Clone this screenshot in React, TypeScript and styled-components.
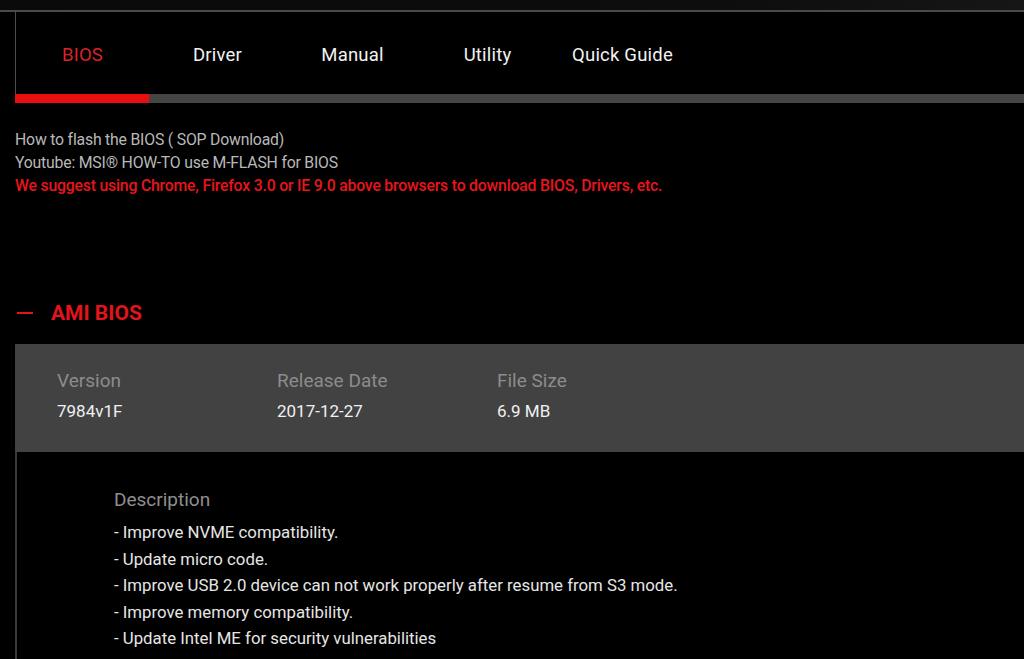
import styled, { createGlobalStyle } from "styled-components";

const GlobalStyle = createGlobalStyle`
  html, body {
    margin: 0;
    padding: 0;
    background: #000;
  }
  body {
    font-family: Roboto, "Liberation Sans", sans-serif;
    color: #fff;
  }
`;

const tabs = ["BIOS", "Driver", "Manual", "Utility", "Quick Guide"];

const links = [
  { text: "How to flash the BIOS ( SOP Download)", warn: false },
  { text: "Youtube: MSI® HOW-TO use M-FLASH for BIOS", warn: false },
  {
    text: "We suggest using Chrome, Firefox 3.0 or IE 9.0 above browsers to download BIOS, Drivers, etc.",
    warn: true,
  },
];

const specs = [
  { label: "Version", value: "7984v1F" },
  { label: "Release Date", value: "2017-12-27" },
  { label: "File Size", value: "6.9 MB" },
];

const notes = [
  "- Improve NVME compatibility.",
  "- Update micro code.",
  "- Improve USB 2.0 device can not work properly after resume from S3 mode.",
  "- Improve memory compatibility.",
  "- Update Intel ME for security vulnerabilities",
];

const App = () => {
  return (
    <>
      <GlobalStyle />
      <Page>
        <TopStrip />
        <TabBar>
          {tabs.map((t, i) => (
            <Tab key={t} $active={i === 0}>
              {t}
            </Tab>
          ))}
        </TabBar>
        <Track>
          <TrackFill />
        </Track>
        <LinkList>
          {links.map((l) => (
            <LinkLine key={l.text} $warn={l.warn}>
              {l.text}
            </LinkLine>
          ))}
        </LinkList>
        <SectionTitle>
          <Dash />
          AMI BIOS
        </SectionTitle>
        <SpecPanel>
          {specs.map((s) => (
            <SpecColumn key={s.label}>
              <SpecLabel>{s.label}</SpecLabel>
              <SpecValue>{s.value}</SpecValue>
            </SpecColumn>
          ))}
        </SpecPanel>
        <DetailArea>
          <DetailLabel>Description</DetailLabel>
          {notes.map((n) => (
            <NoteLine key={n}>{n}</NoteLine>
          ))}
        </DetailArea>
      </Page>
    </>
  );
};

export default App;

const Page = styled.div`
  width: 1024px;
  height: 659px;
  overflow: hidden;
  background: #000;
`;

const TopStrip = styled.div`
  height: 10px;
  background: linear-gradient(90deg, #0a0a0a 0%, #0d0d0d 70%, #161616 100%);
  border-bottom: 2px solid #4a4a4a;
`;

const TabBar = styled.div`
  display: flex;
  flex-direction: row;
  align-items: center;
  height: 82px;
  padding-top: 3px;
  margin-left: 15px;
  border-left: 1px solid #4d4d4d;
  box-sizing: border-box;
`;

const Tab = styled.div<{ $active: boolean }>`
  width: 135px;
  text-align: center;
  font-size: 18.5px;
  letter-spacing: 0.2px;
  color: ${(p) => (p.$active ? "#d8232b" : "#f2f2f2")};
  margin-left: ${(p) => (p.$active ? "-1px" : "0")};
`;

const Track = styled.div`
  display: flex;
  height: 9px;
  margin-left: 15px;
  background: #454545;
`;

const TrackFill = styled.div`
  width: 134px;
  background: #e8100f;
`;

const LinkList = styled.div`
  display: flex;
  flex-direction: column;
  padding-left: 15px;
  margin-top: 25px;
`;

const LinkLine = styled.div<{ $warn: boolean }>`
  font-size: 15.8px;
  line-height: 23px;
  letter-spacing: -0.2px;
  color: ${(p) => (p.$warn ? "#e8151b" : "#b8b8b8")};
  font-weight: ${(p) => (p.$warn ? 500 : 400)};
`;

const SectionTitle = styled.div`
  display: flex;
  align-items: center;
  gap: 18px;
  margin-top: 101px;
  padding-left: 17px;
  height: 30px;
  font-size: 21px;
  font-weight: 700;
  color: #e3141c;
`;

const Dash = styled.span`
  display: block;
  width: 16px;
  height: 2px;
  background: #e3141c;
`;

const SpecPanel = styled.div`
  display: flex;
  flex-direction: row;
  margin-top: 16px;
  margin-left: 15px;
  height: 108px;
  padding-left: 42px;
  padding-top: 25px;
  box-sizing: border-box;
  background: #424242;
`;

const SpecColumn = styled.div`
  display: flex;
  flex-direction: column;
  width: 220px;
  gap: 6px;
`;

const SpecLabel = styled.div`
  font-size: 19px;
  line-height: 24px;
  color: #8c8c8c;
`;

const SpecValue = styled.div`
  font-size: 17px;
  line-height: 24px;
  color: #f0f0f0;
`;

const DetailArea = styled.div`
  display: flex;
  flex-direction: column;
  margin-left: 15px;
  border-left: 2px solid #3a3a3a;
  padding-left: 97px;
  padding-top: 36px;
  height: 300px;
`;

const DetailLabel = styled.div`
  font-size: 19px;
  line-height: 24px;
  color: #8f8f8f;
  margin-bottom: 7px;
`;

const NoteLine = styled.div`
  font-size: 16.8px;
  line-height: 26.5px;
  color: #e6e6e6;
`;
